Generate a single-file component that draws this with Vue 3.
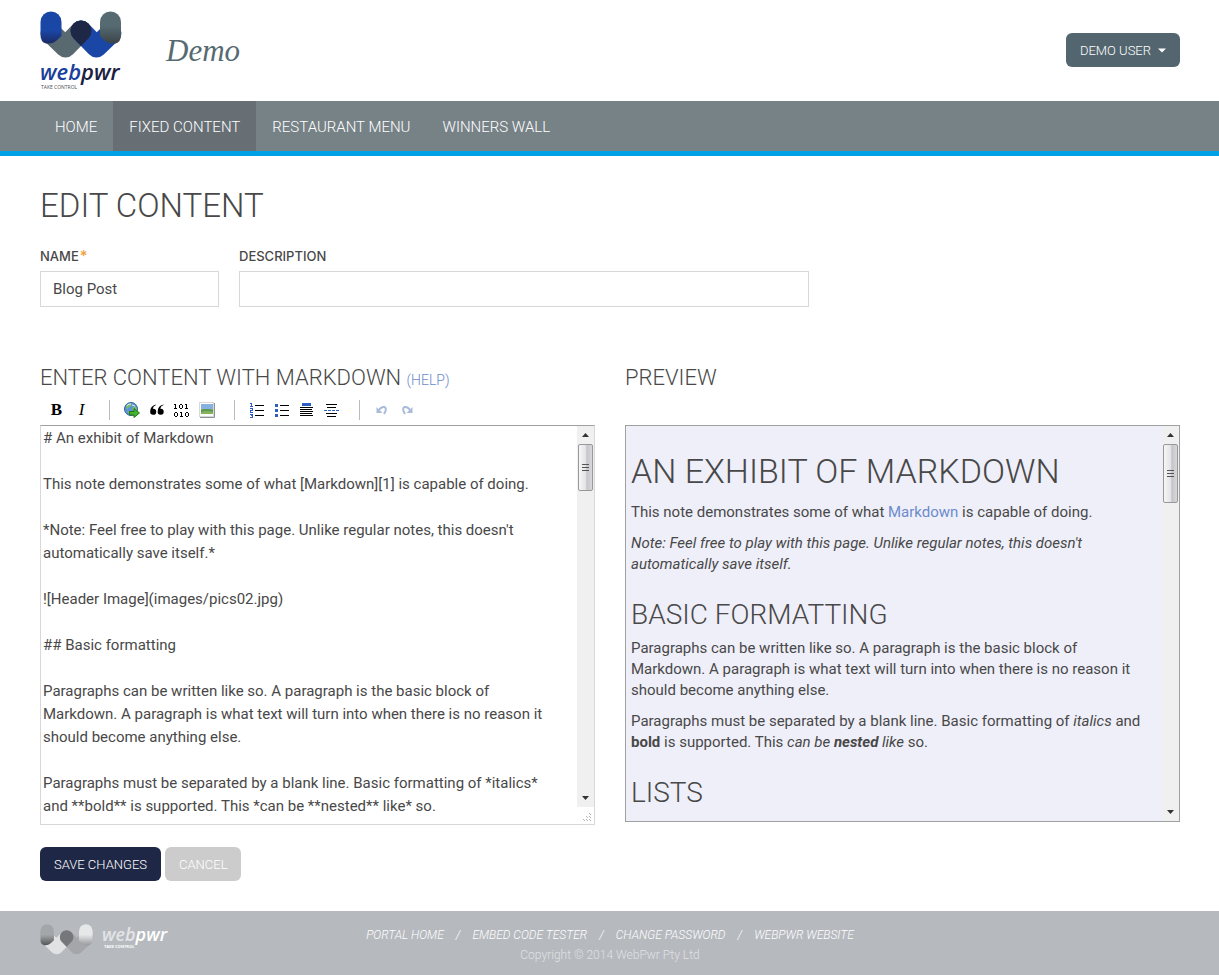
<template>
  <div class="page">
    <header class="header">
      <a href="#" class="logo" aria-label="WebPwr home">
        <svg width="82" height="80" viewBox="0 0 82 80">
          <defs>
            <linearGradient id="capBlue" x1="0" y1="0" x2="0" y2="1">
              <stop offset="0.6" stop-color="#1a46a6" />
              <stop offset="1" stop-color="#1b2a63" />
            </linearGradient>
            <linearGradient id="capGrey" x1="0" y1="0" x2="0" y2="1">
              <stop offset="0.45" stop-color="#566a72" />
              <stop offset="1" stop-color="#3a4348" />
            </linearGradient>
          </defs>
          <path d="M11 22 L25.500 36 L41 20" class="stroke" stroke="#58696f" />
          <path d="M41 20 L56.500 36 L71 22" class="stroke" stroke="#1a46a6" />
          <path d="M33.600 27.400 A10.500 10.500 0 1 1 48.400 27.400 L41 35 Z" fill="#1e2746" />
          <path d="M0.500 11 A10.500 10.500 0 0 1 21.500 11 V25 L16 30 Q13 32.500 9 32.500 H6 Q0.500 31 0.500 24 Z" fill="url(#capBlue)" />
          <path d="M60 11 A10.500 10.500 0 0 1 81 11 V24 Q81 31 75.500 32.500 H72 Q68 32.500 65 30 L60 25 Z" fill="url(#capGrey)" />
          <text x="0" y="69" class="logo-word"><tspan fill="#1a3f9c">web</tspan><tspan fill="#1b2140">pwr</tspan></text>
          <text x="1" y="78" class="logo-tag" fill="#4c5055">TAKE CONTROL</text>
        </svg>
      </a>
      <span class="site-name">Demo</span>
      <button type="button" class="btn btn-user">
        DEMO USER
        <svg width="8" height="5" viewBox="0 0 8 5"><path d="M0 0.500H8L4 4.500Z" fill="#fff" /></svg>
      </button>
    </header>

    <nav class="nav">
      <a
        v-for="item in navItems"
        :key="item"
        href="#"
        :class="{ active: item === activeItem }"
      >{{ item }}</a>
    </nav>

    <main class="main">
      <h1>EDIT CONTENT</h1>

      <div class="fields">
        <div class="field field-name">
          <label for="name">NAME<span class="required">*</span></label>
          <input id="name" v-model="name" type="text" />
        </div>
        <div class="field field-description">
          <label for="description">DESCRIPTION</label>
          <input id="description" v-model="description" type="text" />
        </div>
      </div>

      <div class="columns">
        <section class="column">
          <h2><label for="content">ENTER CONTENT WITH MARKDOWN</label> <a href="#" class="help">(HELP)</a></h2>
          <div class="toolbar">
            <button type="button" class="tool tool-bold" title="Bold">B</button>
            <button type="button" class="tool tool-italic" title="Italic">I</button>
            <span class="separator"></span>
            <button type="button" class="tool" title="Hyperlink">
              <svg width="18" height="18" viewBox="0 0 18 18">
                <circle cx="8" cy="8" r="6.500" fill="#5a93d6" stroke="#35619f" />
                <path d="M3 5 Q5 2 9 2.500 L8 5 L5 7 L4 9 Z M9 7 L13 5 L14 9 L11 11 Z M4 10 L7 11 L7 14 Z" fill="#7cbf62" />
                <path d="M4 4.500 Q6 2.500 8 3M9 4L12 5" fill="none" stroke="#dff0ff" />
                <path d="M6.500 10.500H11V7.500L16.500 12L11 16.500V14H6.500Z" fill="#43b52c" stroke="#217316" />
              </svg>
            </button>
            <button type="button" class="tool" title="Blockquote">
              <svg width="14" height="12" viewBox="0 0 14 12">
                <path d="M6 1Q3 2 2.800 4.800A3 3 0 1 1 0.200 7.500Q0 2 6 0.400Z" fill="#000" />
                <path d="M13.500 1Q10.500 2 10.300 4.800A3 3 0 1 1 7.700 7.500Q7.500 2 13.500 0.400Z" fill="#000" />
              </svg>
            </button>
            <button type="button" class="tool" title="Code">
              <svg width="15" height="13" viewBox="0 0 15 13" fill="#000" shape-rendering="crispEdges">
                <path d="M1 0h1v4h1v1h-3v-1h1v-3h-1v-1zM12 0h1v4h1v1h-3v-1h1v-3h-1v-1z" />
                <path d="M6 0h2v1h-2zM6 4h2v1h-2zM5 1h1v3h-1zM8 1h1v3h-1z" />
                <path d="M1 8h2v1h-2zM1 12h2v1h-2zM0 9h1v3h-1zM3 9h1v3h-1z" />
                <path d="M6 8h2v4h1v1h-3v-1h1v-3h-1v-1z" />
                <path d="M12 8h2v1h-2zM12 12h2v1h-2zM11 9h1v3h-1zM14 9h1v3h-1z" />
              </svg>
            </button>
            <button type="button" class="tool" title="Image">
              <svg width="16" height="16" viewBox="0 0 16 16">
                <rect x="0.500" y="0.500" width="14" height="14" fill="#fff" stroke="#d4d8da" />
                <path d="M15.500 1V15.500H1" fill="none" stroke="#8d9499" />
                <rect x="2" y="2" width="12" height="6" fill="#86b0e0" />
                <rect x="2" y="7" width="12" height="5" fill="#84b55e" />
                <path d="M2 8Q7 6 14 8V10Q8 8 2 10Z" fill="#5f9555" />
              </svg>
            </button>
            <span class="separator"></span>
            <button type="button" class="tool" title="Numbered List">
              <svg width="14" height="15" viewBox="0 0 14 15" fill="none" shape-rendering="crispEdges">
                <path d="M5 2.500H14M5 7.500H14M5 12.500H14" stroke="#000" />
                <path d="M0 0.500H2M1.500 0V4M0 3.500H3M0 5.500H3M2.500 5V7M0 7.500H3M0.500 7V9M0 9.500H3M0 11.500H3M1 12.500H3M0 14.500H3M2.500 11V15" stroke="#2c5fc4" />
              </svg>
            </button>
            <button type="button" class="tool" title="Bulleted List">
              <svg width="14" height="13" viewBox="0 0 14 13" shape-rendering="crispEdges">
                <path d="M0 0H3V3H0ZM0 5H3V8H0ZM0 10H3V13H0Z" fill="#2c5fc4" />
                <path d="M5 1.500H14M5 6.500H14M5 11.500H14" stroke="#000" />
              </svg>
            </button>
            <button type="button" class="tool" title="Heading">
              <svg width="13" height="14" viewBox="0 0 13 14" shape-rendering="crispEdges">
                <path d="M2 0H11V3H2Z" fill="#2c5fc4" />
                <path d="M0 4.500H13M0 6.500H12M0 8.500H13M0 10.500H12M0 12.500H13" stroke="#000" />
              </svg>
            </button>
            <button type="button" class="tool" title="Horizontal Rule">
              <svg width="15" height="13" viewBox="0 0 15 13" fill="none" shape-rendering="crispEdges">
                <path d="M2 0.500H13M3 3.500H12M2 9.500H13M3 12.500H12" stroke="#000" />
                <path d="M0 6.500H15" stroke="#2c5fc4" stroke-dasharray="3 1" />
              </svg>
            </button>
            <span class="separator"></span>
            <button type="button" class="tool" title="Undo" disabled>
              <svg width="12" height="10" viewBox="0 0 12 10">
                <path d="M3 5Q5 1.500 8.500 2Q11.500 3.500 8 9" fill="none" stroke="#a9bbd9" stroke-width="2" />
                <path d="M0.500 2V8H6.500Z" fill="#a9bbd9" />
              </svg>
            </button>
            <button type="button" class="tool" title="Redo" disabled>
              <svg width="12" height="10" viewBox="0 0 12 10">
                <path d="M9 5Q7 1.500 3.500 2Q0.500 3.500 4 9" fill="none" stroke="#a9bbd9" stroke-width="2" />
                <path d="M11.500 2V8H5.500Z" fill="#a9bbd9" />
              </svg>
            </button>
          </div>

          <div class="pane editor">
            <textarea id="content" v-model="content" spellcheck="false"></textarea>
            <div class="side">
              <div class="scrollbar">
                <svg class="arrow" width="7" height="4" viewBox="0 0 7 4"><path d="M3.500 0L7 4H0Z" fill="#333" /></svg>
                <div class="thumb thumb-editor"><i></i><i></i><i></i></div>
                <svg class="arrow arrow-down" width="7" height="4" viewBox="0 0 7 4"><path d="M0 0H7L3.500 4Z" fill="#333" /></svg>
              </div>
              <svg class="grip" width="10" height="10" viewBox="0 0 10 10" fill="#b4b4b4" shape-rendering="crispEdges">
                <path d="M7 0h1v1h-1zM4 3h1v1h-1zM7 3h1v1h-1zM1 6h1v1h-1zM4 6h1v1h-1zM7 6h1v1h-1zM8 1h1v1h-1zM5 4h1v1h-1zM8 4h1v1h-1zM2 7h1v1h-1zM5 7h1v1h-1zM8 7h1v1h-1z" />
              </svg>
            </div>
          </div>
        </section>

        <section class="column">
          <h2>PREVIEW</h2>
          <div class="pane preview">
            <article>
              <h1>AN EXHIBIT OF MARKDOWN</h1>
              <p>This note demonstrates some of what <a href="#">Markdown</a> is capable of doing.</p>
              <p><em>Note: Feel free to play with this page. Unlike regular notes, this doesn't automatically save itself.</em></p>
              <h2>BASIC FORMATTING</h2>
              <p>Paragraphs can be written like so. A paragraph is the basic block of Markdown. A paragraph is what text will turn into when there is no reason it should become anything else.</p>
              <p>Paragraphs must be separated by a blank line. Basic formatting of <em>italics</em> and <strong>bold</strong> is supported. This <em>can be <strong>nested</strong> like</em> so.</p>
              <h2>LISTS</h2>
            </article>
            <div class="scrollbar">
              <svg class="arrow" width="7" height="4" viewBox="0 0 7 4"><path d="M3.500 0L7 4H0Z" fill="#333" /></svg>
              <div class="thumb thumb-preview"><i></i><i></i><i></i></div>
              <svg class="arrow arrow-down" width="7" height="4" viewBox="0 0 7 4"><path d="M0 0H7L3.500 4Z" fill="#333" /></svg>
            </div>
          </div>
        </section>
      </div>

      <div class="actions">
        <button type="button" class="btn btn-save">SAVE CHANGES</button>
        <button type="button" class="btn btn-cancel">CANCEL</button>
      </div>
    </main>

    <footer class="footer">
      <a href="#" class="footer-logo" aria-label="WebPwr">
        <svg width="130" height="32" viewBox="0 0 130 32">
          <defs>
            <linearGradient id="footLeft" x1="0" y1="0" x2="0" y2="1">
              <stop offset="0.5" stop-color="#a3a7aa" />
              <stop offset="1" stop-color="#55585b" />
            </linearGradient>
            <linearGradient id="footRight" x1="0" y1="0" x2="0" y2="1">
              <stop offset="0.5" stop-color="#e6e7e9" />
              <stop offset="1" stop-color="#999b9e" />
            </linearGradient>
          </defs>
          <g transform="scale(0.65)">
            <path d="M11 22 L25.500 36 L41 20" class="stroke" stroke="#e1e2e3" />
            <path d="M41 20 L56.500 36 L71 22" class="stroke" stroke="#a4a6a9" />
            <path d="M33.600 27.400 A10.500 10.500 0 1 1 48.400 27.400 L41 35 Z" fill="#75777b" />
            <path d="M0.500 11 A10.500 10.500 0 0 1 21.500 11 V25 L16 30 Q13 32.500 9 32.500 H6 Q0.500 31 0.500 24 Z" fill="url(#footLeft)" />
            <path d="M60 11 A10.500 10.500 0 0 1 81 11 V24 Q81 31 75.500 32.500 H72 Q68 32.500 65 30 L60 25 Z" fill="url(#footRight)" />
          </g>
          <text x="62" y="17" class="footer-word"><tspan fill="#e3e4e6">web</tspan><tspan fill="#fff">pwr</tspan></text>
          <text x="64" y="24" class="footer-tag" fill="#fff">TAKE CONTROL</text>
        </svg>
      </a>
      <div class="footer-text">
        <div class="footer-links">
          <template v-for="(link, i) in footerLinks" :key="link">
            <span v-if="i > 0">/</span>
            <a href="#">{{ link }}</a>
          </template>
        </div>
        <p>Copyright © 2014 WebPwr Pty Ltd</p>
      </div>
    </footer>
  </div>
</template>

<script setup>
import { ref } from 'vue';

const navItems = ['HOME', 'FIXED CONTENT', 'RESTAURANT MENU', 'WINNERS WALL'];
const activeItem = ref('FIXED CONTENT');
const footerLinks = ['PORTAL HOME', 'EMBED CODE TESTER', 'CHANGE PASSWORD', 'WEBPWR WEBSITE'];

const name = ref('Blog Post');
const description = ref('');
const content = ref(`# An exhibit of Markdown

This note demonstrates some of what [Markdown][1] is capable of doing.

*Note: Feel free to play with this page. Unlike regular notes, this doesn't automatically save itself.*

![Header Image](images/pics02.jpg)

## Basic formatting

Paragraphs can be written like so. A paragraph is the basic block of Markdown. A paragraph is what text will turn into when there is no reason it should become anything else.

Paragraphs must be separated by a blank line. Basic formatting of *italics* and **bold** is supported. This *can be **nested** like* so.`);
</script>

<style>
body {
  margin: 0;
  background: #fff;
}
</style>

<style scoped>
* {
  box-sizing: border-box;
}

.page {
  font-family: Roboto, "Liberation Sans", sans-serif;
  font-size: 15px;
  color: #484848;
}

a {
  color: #6b8bcb;
  text-decoration: none;
}

button,
input,
textarea {
  font-family: inherit;
  color: inherit;
}

h1,
h2,
p {
  margin: 0;
}

/* Header */
.header {
  display: flex;
  align-items: center;
  height: 101px;
  padding: 0 39px 1px 40px;
}

.logo svg,
.footer-logo svg {
  display: block;
  overflow: visible;
}

.logo {
  padding-top: 2px;
}

.stroke {
  fill: none;
  stroke-width: 21px;
  stroke-linecap: round;
  stroke-linejoin: round;
}

.logo-word,
.footer-word {
  font-family: "Open Sans", sans-serif;
  font-style: italic;
  font-weight: 600;
  font-size: 22px;
}

.logo-tag,
.footer-tag {
  font-family: "Open Sans", sans-serif;
  font-size: 5px;
}

.site-name {
  margin-left: 44px;
  padding-top: 2px;
  font-family: "Liberation Serif", serif;
  font-style: italic;
  font-size: 31px;
  color: #566a72;
}

.btn {
  height: 34px;
  padding: 0 14px;
  border: 0;
  border-radius: 6px;
  font-weight: 300;
  font-size: 13px;
  color: #fff;
}

.btn-user {
  display: flex;
  align-items: center;
  gap: 7px;
  margin-left: auto;
  background: #53666f;
}

/* Navigation */
.nav {
  display: flex;
  height: 55px;
  padding: 0 39px;
  background: #778287;
  border-bottom: 5px solid #00a0e6;
}

.nav a {
  padding: 0 16px;
  font-weight: 300;
  font-size: 15px;
  line-height: 52px;
  color: #fff;
}

.nav a.active {
  height: 50px;
  background: #676f75;
}

/* Content */
.main {
  padding: 30px 39px 30px 40px;
}

.main h1,
.main h2 {
  font-weight: 300;
}

.main h1 {
  font-size: 33px;
  line-height: 40px;
}

.fields {
  display: flex;
  gap: 20px;
  margin-top: 20px;
}

.field-name {
  width: 179px;
}

.field-description {
  width: 50%;
}

.field label {
  display: block;
  font-family: Inter, sans-serif;
  font-weight: 500;
  font-size: 13px;
  line-height: 20px;
}

.required {
  margin-left: 1px;
  font-size: 15px;
  line-height: 1;
  color: #f0a040;
}

.field input {
  display: block;
  width: 100%;
  height: 36px;
  margin-top: 5px;
  padding: 0 12px;
  border: 1px solid #d8d8d8;
  font-size: 15px;
}

.columns {
  display: grid;
  grid-template-columns: 1fr 1fr;
  gap: 30px;
  margin-top: 56px;
}

.column {
  display: flex;
  flex-direction: column;
  min-width: 0;
}

.column > h2 {
  font-size: 22px;
  line-height: 30px;
}

.help {
  font-size: 14px;
}

.toolbar {
  display: flex;
  height: 30px;
  padding-left: 4px;
}

.tool {
  display: flex;
  align-items: center;
  justify-content: center;
  width: 25px;
  height: 30px;
  padding: 0;
  border: 0;
  background: none;
}

.tool-bold,
.tool-italic {
  font-family: "Liberation Serif", serif;
  font-size: 17px;
  color: #000;
}

.tool-bold {
  font-weight: 700;
}

.tool-italic {
  font-style: italic;
}

.separator {
  width: 1px;
  height: 20px;
  margin: 5px 9px 5px 15px;
  background: #bbb;
}

.pane {
  display: flex;
  border: 1px solid #a0a0a0;
}

.editor {
  height: 400px;
  border-color: #a0a0a0 #d8d8d8 #d8d8d8;
}

.editor textarea {
  flex: 1;
  min-width: 0;
  padding: 1px 16px 0 2px;
  border: 0;
  outline: 0;
  resize: none;
  overflow: hidden;
  background: #fff;
  font-size: 15px;
  line-height: 23px;
}

.side {
  display: flex;
  flex-direction: column;
}

.scrollbar {
  display: flex;
  flex: 1;
  flex-direction: column;
  align-items: center;
  width: 17px;
  background: #f0f0f0;
}

.arrow {
  margin: 7px 0;
}

.arrow-down {
  margin-top: auto;
}

.thumb {
  display: flex;
  flex-direction: column;
  align-items: center;
  justify-content: center;
  gap: 2px;
  width: 15px;
  border: 1px solid #989898;
  border-radius: 2px;
  background: linear-gradient(to right, #f6f6f6 0%, #e4e4e6 50%, #c4c5ca 60%, #d8d8dc 100%);
}

.thumb i {
  width: 7px;
  height: 1px;
  background: #555;
}

.thumb-editor {
  height: 47px;
}

.thumb-preview {
  height: 59px;
}

.grip {
  margin: 6px 2px 1px 5px;
}

.preview {
  height: 397px;
  margin-top: 32px;
  background: #efeff9;
  overflow: hidden;
}

.preview article {
  flex: 1;
  min-width: 0;
  padding: 25px 12px 0 5px;
}

.preview .scrollbar {
  flex: none;
}

.preview p {
  margin-bottom: 10px;
  line-height: 21px;
}

.main .preview h1 {
  margin-bottom: 11px;
  font-size: 34px;
}

.preview h2 {
  margin: 20px 0 3px;
  font-size: 28px;
  line-height: 40px;
}

.actions {
  display: flex;
  gap: 4px;
  margin-top: 22px;
}

.btn-save {
  background: #1e2746;
}

.btn-cancel {
  background: #ccc;
}

/* Footer */
.footer {
  display: grid;
  grid-template-columns: 130px 1fr 130px;
  height: 64px;
  padding: 13px 39px 0 40px;
  background: #b6b9be;
}

.footer-word {
  font-size: 18px;
}

.footer-tag {
  font-size: 4px;
  font-weight: 700;
}

.footer-text {
  text-align: center;
}

.footer-links {
  display: flex;
  justify-content: center;
  gap: 12px;
  font-style: italic;
  font-weight: 300;
  font-size: 12px;
  line-height: 22px;
  color: #fff;
}

.footer-links a {
  color: #fff;
}

.footer-text p {
  font-size: 12px;
  font-weight: 300;
  line-height: 18px;
  color: #e0e2e4;
}
</style>
